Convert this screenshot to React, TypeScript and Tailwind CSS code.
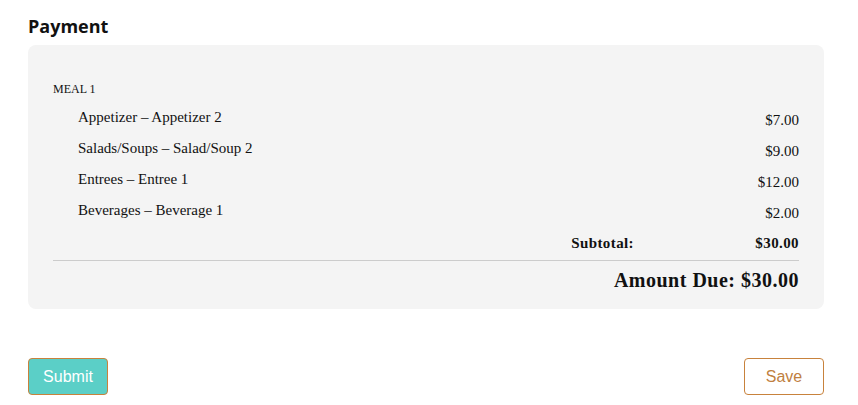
import React from 'react';

interface LineItem {
  label: string;
  price: string;
}

const items: LineItem[] = [
  {label: 'Appetizer – Appetizer 2', price: '$7.00'},
  {label: 'Salads/Soups – Salad/Soup 2', price: '$9.00'},
  {label: 'Entrees – Entree 1', price: '$12.00'},
  {label: 'Beverages – Beverage 1', price: '$2.00'},
];

function App() {
  return (
    <div className="w-[858px] h-[405px] bg-white pl-[28px] pr-[34px] pt-[13px]">
      {/* Heading */}
      <h2 className="text-[18px] font-bold leading-[26px] text-[#111] font-['Open_Sans',sans-serif]">
        Payment
      </h2>

      {/* Summary panel */}
      <div className="mt-[6px] h-[264px] rounded-lg bg-[#f4f4f4] px-[25px] pt-[36px] font-['Liberation_Serif',serif] text-[#111]">
        <div className="text-[12px] leading-[16px] uppercase">Meal 1</div>

        <div className="mt-[10px] flex flex-col">
          {items.map((item) => (
            <div key={item.label} className="flex h-[31px] items-start justify-between text-[15px]">
              <span className="pl-[25px] leading-[20px]">{item.label}</span>
              <span className="pt-[3px] leading-[20px]">{item.price}</span>
            </div>
          ))}
        </div>

        {/* Subtotal */}
        <div className="flex justify-end pt-[2px] text-[15px] font-bold leading-[20px] tracking-[0.4px]">
          <span>Subtotal:</span>
          <span className="w-[165px] text-right">$30.00</span>
        </div>

        <div className="mt-[7px] border-t border-[#cccccc]" />

        <div className="mt-[6px] text-right text-[20px] font-bold leading-[26px] tracking-[0.5px]">
          Amount Due: $30.00
        </div>
      </div>

      {/* Actions */}
      <div className="mt-[49px] flex justify-between font-['Liberation_Sans',sans-serif] text-[16px]">
        <button
          type="button"
          className="h-[37px] w-[80px] rounded-[4px] border border-[#c8823c] bg-[#5bcfc7] text-white"
        >
          Submit
        </button>
        <button
          type="button"
          className="h-[37px] w-[80px] rounded-[4px] border border-[#c8823c] bg-white text-[#c0803f]"
        >
          Save
        </button>
      </div>
    </div>
  );
}

export default App;
